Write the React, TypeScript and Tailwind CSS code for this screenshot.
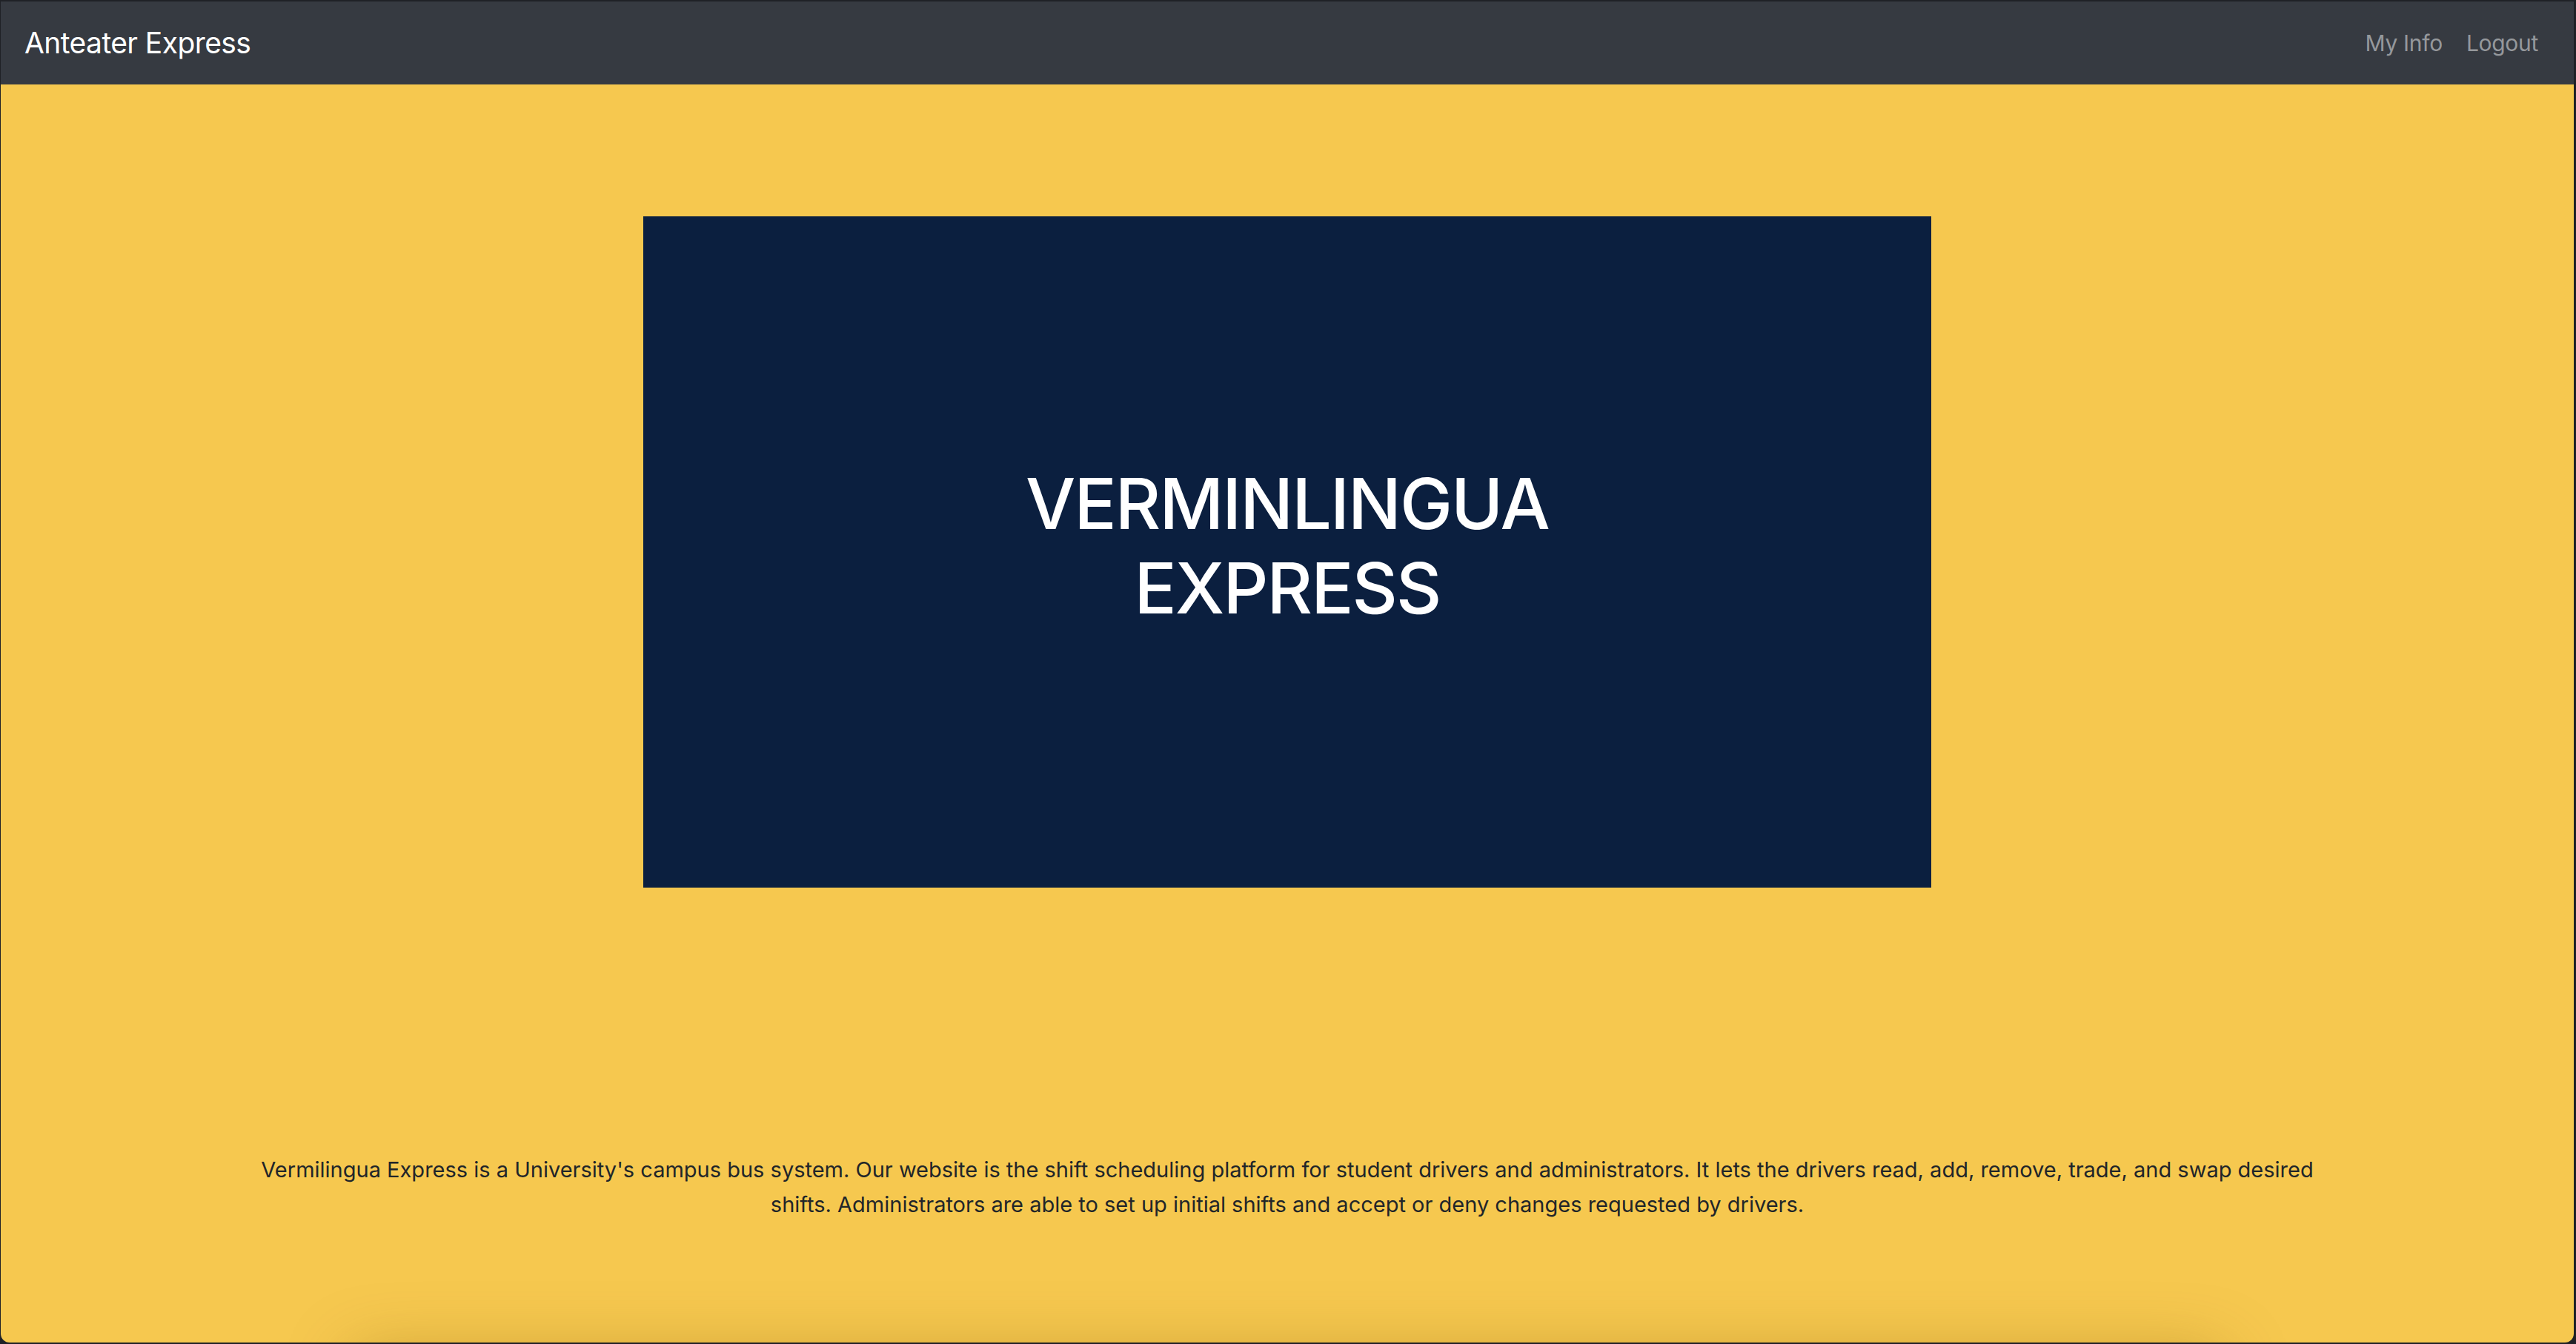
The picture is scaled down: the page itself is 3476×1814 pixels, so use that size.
import React from "react";

const sans = "font-['Inter','Liberation_Sans',sans-serif]";

function NavBar() {
  return (
    <nav className="flex h-[112px] shrink-0 items-center justify-between bg-[#363a41] px-[32px]">
      <a href="#" className="text-[39px] leading-[60px] tracking-[-0.015em] text-white">
        Anteater Express
      </a>
      <div className="flex items-center text-[30px] leading-[48px] tracking-[-0.01em] text-[#95989c]">
        <a href="#" className="px-[16px]">
          My Info
        </a>
        <a href="#" className="px-[16px]">
          Logout
        </a>
      </div>
    </nav>
  );
}

function Hero() {
  return (
    <section className="mx-auto mt-[178px] flex h-[906px] w-[1738px] shrink-0 flex-col items-center justify-center bg-[#0b1f3f]">
      <h1 className="mb-[16px] max-w-[760px] text-center text-[95px] font-medium leading-[114px] tracking-[-0.02em] text-white">
        VERMINLINGUA EXPRESS
      </h1>
    </section>
  );
}

export default function App() {
  return (
    <div className={`h-screen w-full overflow-hidden bg-[#1f2126] pb-[2px] pl-[1px] pr-[3px] pt-[2px] ${sans}`}>
      <div className="flex h-full flex-col overflow-hidden rounded-b-[12px] bg-[#f6c84f]">
        <NavBar />
        <Hero />
        <p className="mx-auto mt-[357px] max-w-[2790px] text-center text-[29px] leading-[47px] text-[#212529]">
          Vermilingua Express is a University's campus bus system. Our website is the shift scheduling platform for
          student drivers and administrators. It lets the drivers read, add, remove, trade, and swap desired shifts.
          Administrators are able to set up initial shifts and accept or deny changes requested by drivers.
        </p>
        {/* card sitting just below the fold, only its shadow shows */}
        <div className="mx-auto mt-[180px] h-[400px] w-[2520px] shrink-0 rounded-[8px] bg-[#f6c84f] shadow-[0_0_90px_rgba(120,80,0,0.35)]" />
      </div>
    </div>
  );
}
